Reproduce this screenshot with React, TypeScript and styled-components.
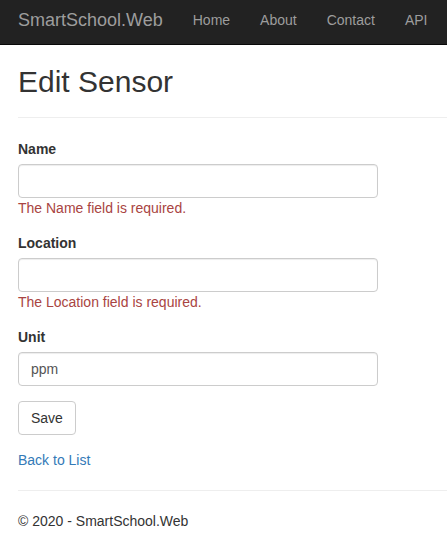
import React from "react";
import styled, { createGlobalStyle } from "styled-components";

const GlobalStyle = createGlobalStyle`
  html, body {
    margin: 0;
    padding: 0;
    background: #fff;
  }
  body {
    font-family: "Liberation Sans", Arial, Helvetica, sans-serif;
    font-size: 14px;
    line-height: 20px;
    color: #333;
    overflow: hidden;
  }
  * { box-sizing: border-box; }
`;

const Navbar = styled.nav`
  height: 45px;
  background: #222;
  border-bottom: 1px solid #080808;
  display: flex;
  align-items: flex-start;
  padding-left: 18px;
`;

const Brand = styled.a`
  font-size: 18px;
  line-height: 20px;
  padding-top: 10px;
  color: #9d9d9d;
  text-decoration: none;
  margin-right: 15px;
  white-space: nowrap;
`;

const NavList = styled.ul`
  list-style: none;
  margin: 0;
  padding: 0;
  display: flex;
`;

const NavLink = styled.a`
  display: block;
  padding: 10px 15px 0;
  line-height: 20px;
  font-size: 14px;
  color: #9d9d9d;
  text-decoration: none;
  white-space: nowrap;
`;

const Container = styled.main`
  padding-left: 18px;
`;

const Title = styled.h2`
  margin: 20px 0 0;
  font-size: 30px;
  line-height: 33px;
  font-weight: 500;
  color: #333;
`;

const Rule = styled.hr<{ $top: number; $bottom: number }>`
  margin: ${(p) => p.$top}px 0 ${(p) => p.$bottom}px;
  border: 0;
  border-top: 1px solid #eee;
  height: 0;
`;

const FormGroup = styled.div`
  margin-bottom: 15px;
`;

const Label = styled.label`
  display: block;
  font-weight: 700;
  margin-bottom: 5px;
  line-height: 20px;
`;

const Input = styled.input`
  display: block;
  width: 360px;
  height: 34px;
  padding: 6px 12px;
  font-family: inherit;
  font-size: 14px;
  line-height: 20px;
  color: #555;
  background: #fff;
  border: 1px solid #ccc;
  border-radius: 4px;
  box-shadow: inset 0 1px 1px rgba(0, 0, 0, 0.075);
  outline: none;
`;

const ErrorText = styled.span`
  display: block;
  color: #a94442;
  line-height: 20px;
`;

const Button = styled.button`
  display: block;
  height: 34px;
  padding: 6px 12px;
  font-family: inherit;
  font-size: 14px;
  line-height: 20px;
  color: #333;
  background: #fff;
  border: 1px solid #ccc;
  border-radius: 4px;
`;

const LinkRow = styled.div`
  line-height: 20px;
`;

const TextLink = styled.a`
  color: #337ab7;
  text-decoration: none;
`;

const Footer = styled.footer`
  margin: 0;
  line-height: 20px;
`;

const fields = [
  { label: "Name", value: "", error: "The Name field is required." },
  { label: "Location", value: "", error: "The Location field is required." },
  { label: "Unit", value: "ppm", error: "" },
];

export default function App() {
  return (
    <>
      <GlobalStyle />
      <Navbar>
        <Brand href="#">SmartSchool.Web</Brand>
        <NavList>
          {["Home", "About", "Contact", "API"].map((n) => (
            <li key={n}>
              <NavLink href="#">{n}</NavLink>
            </li>
          ))}
        </NavList>
      </Navbar>
      <Container>
        <Title>Edit Sensor</Title>
        <Rule $top={19} $bottom={21} />
        <form onSubmit={(e) => e.preventDefault()}>
          {fields.map((f) => (
            <FormGroup key={f.label}>
              <Label>{f.label}</Label>
              <Input type="text" defaultValue={f.value} />
              {f.error && <ErrorText>{f.error}</ErrorText>}
            </FormGroup>
          ))}
          <FormGroup>
            <Button type="submit">Save</Button>
          </FormGroup>
        </form>
        <LinkRow>
          <TextLink href="#">Back to List</TextLink>
        </LinkRow>
        <Rule $top={20} $bottom={20} />
        <Footer>© 2020 - SmartSchool.Web</Footer>
      </Container>
    </>
  );
}
